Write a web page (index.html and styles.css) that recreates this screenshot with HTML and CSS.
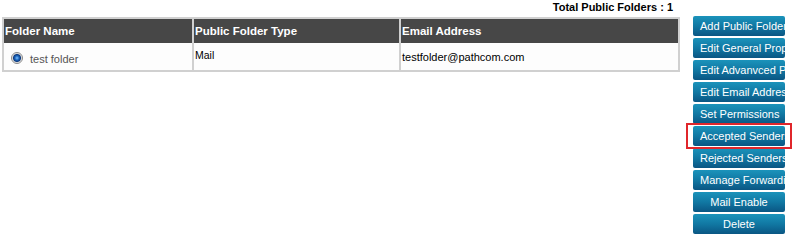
FILE: index.html
```html
<!DOCTYPE html>
<html lang="en">
<head>
    <meta charset="UTF-8">
    <title>Public Folders</title>
    <link rel="stylesheet" href="styles.css">
</head>
<body>
    <div class="page">
        <div class="main">
            <div class="total">Total Public Folders : 1</div>
            <table class="folders">
                <colgroup>
                    <col class="col-name">
                    <col class="col-type">
                    <col class="col-mail">
                </colgroup>
                <tr>
                    <th>Folder Name</th>
                    <th>Public Folder Type</th>
                    <th>Email Address</th>
                </tr>
                <tr>
                    <td class="cell-name"><span class="radio"></span>test folder</td>
                    <td class="cell-type">Mail</td>
                    <td>testfolder@pathcom.com</td>
                </tr>
            </table>
        </div>

        <div class="actions">
            <button>Add Public Folder</button>
            <button>Edit General Properties</button>
            <button>Edit Advanvced Properties</button>
            <button>Edit Email Addresses</button>
            <button>Set Permissions</button>
            <div class="selected"><button>Accepted Senders</button></div>
            <button>Rejected Senders</button>
            <button>Manage Forwarding</button>
            <button>Mail Enable</button>
            <button>Delete</button>
        </div>
    </div>
</body>
</html>
```

FILE: styles.css
```css
body {
    margin: 0;
    background-color: #fff;
    font-family: "Liberation Sans", Arial, sans-serif;
}
.page {
    display: flex;
    align-items: flex-start;
}
.main {
    width: 678px;
    padding-left: 2px;
}
.total {
    font-size: 11px;
    font-weight: bold;
    color: #000;
    text-align: right;
    padding-right: 7px;
    height: 15px;
    line-height: 14px;
    margin-bottom: 2px;
}
.folders {
    width: 678px;
    table-layout: fixed;
    border-collapse: collapse;
    border: 2px solid #d0d0d0;
}
.folders .col-name {
    width: 190px;
}
.folders .col-type {
    width: 207px;
}
.folders th {
    background-color: #474747;
    color: #fff;
    font-size: 11.5px;
    text-align: left;
    height: 24px;
    padding: 0 1px;
    border-left: 2px solid #d0d0d0;
}
.folders td {
    height: 24px;
    padding: 0 1px;
    font-size: 11px;
    color: #000;
    border-left: 2px solid #d0d0d0;
    background-color: #fdfdfd;
}
.folders .cell-name {
    color: #555;
    padding-left: 7px;
    padding-top: 3px;
}
.folders .cell-type {
    font-size: 10.5px;
    padding-bottom: 3px;
}
.radio {
    display: inline-block;
    width: 10px;
    height: 10px;
    border-radius: 50%;
    border: 1px solid #8a8a8a;
    background: radial-gradient(circle, #7cc0ff 0, #1d68c0 2px, #0c3a80 3.5px, #d8d8d8 4.5px, #f5f5f5 5px);
    vertical-align: -1px;
    margin-right: 7px;
}

/* botones de acciones */
.actions {
    width: 92px;
    margin-left: 13px;
    padding-top: 16px;
    display: flex;
    flex-direction: column;
    gap: 2px;
}
.actions button {
    display: block;
    width: 92px;
    height: 20px;
    padding: 0 7px;
    border: none;
    border-radius: 2px;
    background: linear-gradient(to bottom, #1b93bb 0%, #1178a3 50%, #0a5683 100%);
    color: #fff;
    font-family: "Liberation Sans", Arial, sans-serif;
    font-size: 11px;
    text-align: center;
    white-space: nowrap;
    overflow: hidden;
    cursor: pointer;
}
.selected {
    position: relative;
}
.selected::after {
    content: "";
    position: absolute;
    top: -3px;
    bottom: -3px;
    left: -7px;
    right: -7px;
    border: 2px solid #e0262b;
    pointer-events: none;
}
```
